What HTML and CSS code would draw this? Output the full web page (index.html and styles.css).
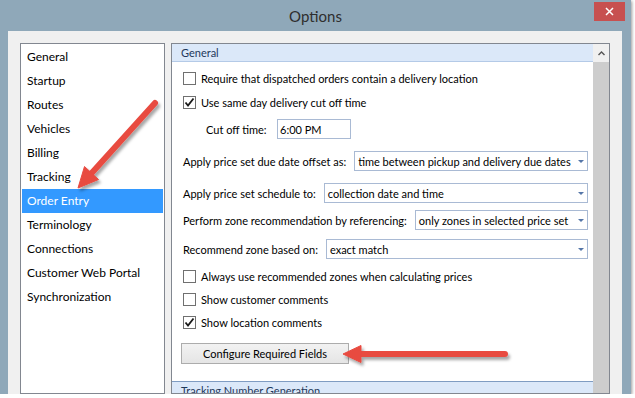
FILE: index.html
```html
<!DOCTYPE html>
<html lang="en">
<head>
  <meta charset="UTF-8">
  <meta name="viewport" content="width=device-width, initial-scale=1.0">
  <title>Options</title>
  <link rel="stylesheet" href="styles.css">
</head>
<body>
  <div class="window">
    <div class="titlebar">
      <span class="title">Options</span>
      <div class="close-btn">
        <svg width="9" height="9" viewBox="0 0 9 9"><path d="M1 1 L8 8 M8 1 L1 8" stroke="#fff" stroke-width="1.5"/></svg>
      </div>
    </div>

    <div class="client">
      <ul class="nav">
        <li>General</li>
        <li>Startup</li>
        <li>Routes</li>
        <li>Vehicles</li>
        <li>Billing</li>
        <li>Tracking</li>
        <li class="selected">Order Entry</li>
        <li>Terminology</li>
        <li>Connections</li>
        <li>Customer Web Portal</li>
        <li>Synchronization</li>
      </ul>

      <div class="panel">
        <div class="panel-body">
          <div class="band">General</div>
          <div class="section">
            <div class="check-row">
              <span class="checkbox"></span>
              <span>Require that dispatched orders contain a delivery location</span>
            </div>
            <div class="check-row second">
              <span class="checkbox checked">
                <svg width="11" height="11" viewBox="0 0 11 11"><path d="M1.5 5.5 L4 8.5 L9.5 1.5" fill="none" stroke="#1a1a1a" stroke-width="1.8"/></svg>
              </span>
              <span>Use same day delivery cut off time</span>
            </div>
            <div class="cut-row">
              <span class="cut-label">Cut off time:</span>
              <span class="textbox">6:00 PM</span>
            </div>
            <div class="field-row row-offset">
              <span>Apply price set due date offset as:</span>
              <span class="select">time between pickup and delivery due dates</span>
            </div>
            <div class="field-row row-schedule">
              <span>Apply price set schedule to:</span>
              <span class="select">collection date and time</span>
            </div>
            <div class="field-row row-zone">
              <span>Perform zone recommendation by referencing:</span>
              <span class="select">only zones in selected price set</span>
            </div>
            <div class="field-row row-based">
              <span>Recommend zone based on:</span>
              <span class="select">exact match</span>
            </div>
            <div class="check-row after-fields">
              <span class="checkbox"></span>
              <span>Always use recommended zones when calculating prices</span>
            </div>
            <div class="check-row">
              <span class="checkbox"></span>
              <span>Show customer comments</span>
            </div>
            <div class="check-row">
              <span class="checkbox checked">
                <svg width="11" height="11" viewBox="0 0 11 11"><path d="M1.5 5.5 L4 8.5 L9.5 1.5" fill="none" stroke="#1a1a1a" stroke-width="1.8"/></svg>
              </span>
              <span>Show location comments</span>
            </div>
            <button class="btn" type="button">Configure Required Fields</button>
          </div>
          <div class="band band-next">Tracking Number Generation</div>
        </div>
        <div class="scrollbar">
          <div class="scroll-up">
            <svg width="7" height="5" viewBox="0 0 7 5"><path d="M0.5 4 L3.5 1 L6.5 4" fill="none" stroke="#555" stroke-width="1.4"/></svg>
          </div>
          <div class="scroll-thumb"></div>
        </div>
      </div>
    </div>

    <!-- callout arrows drawn over the dialog -->
    <svg class="arrows" width="631" height="394" viewBox="0 0 631 394">
      <defs>
        <filter id="shadow" x="-20%" y="-20%" width="140%" height="160%">
          <feDropShadow dx="2" dy="3" stdDeviation="1.5" flood-color="#000" flood-opacity="0.35"/>
        </filter>
      </defs>
      <g filter="url(#shadow)" fill="#e84b41" stroke="#e84b41">
        <line x1="155" y1="103" x2="89" y2="176" stroke-width="6" stroke-linecap="round"/>
        <polygon points="78,188 84.5,166.5 98.5,179.5" stroke-width="1" stroke-linejoin="round"/>
        <line x1="505" y1="354" x2="356" y2="354" stroke-width="6" stroke-linecap="round"/>
        <polygon points="343,354 361,345.5 361,362.5" stroke-width="1" stroke-linejoin="round"/>
      </g>
    </svg>
  </div>
</body>
</html>
```

FILE: styles.css
```css
body {
  margin: 0;
  padding: 0;
  background-color: #ffffff;
  font-family: Lato, "Liberation Sans", sans-serif;
}
.window {
  position: relative;
  width: 631px;
  height: 394px;
  background-color: #8fa8b9;
  box-shadow: 1px 1px 3px rgba(0, 0, 0, 0.4);
  overflow: hidden;
}
.titlebar {
  height: 31px;
  display: grid;
  grid-template-columns: 1fr auto 1fr;
  align-items: center;
}
.title {
  grid-column: 2;
  font-size: 15px;
  color: #2e2e2e;
}
.close-btn {
  grid-column: 3;
  justify-self: end;
  align-self: start;
  width: 31px;
  height: 19px;
  margin-top: 2px;
  margin-right: 6px;
  background-color: #c75050;
  display: flex;
  align-items: center;
  justify-content: center;
}
.client {
  height: 363px;
  box-sizing: border-box;
  margin: 0 9px 0 8px;
  padding: 12px 12px 0;
  background-color: #f0f0f0;
  display: flex;
  gap: 6px;
}
.nav {
  width: 145px;
  box-sizing: border-box;
  margin: 0;
  padding: 1px;
  list-style: none;
  background-color: #ffffff;
  border: 1px solid #828790;
}
.nav li {
  height: 24px;
  line-height: 24px;
  padding-left: 5px;
  font-size: 12px;
  color: #000000;
}
.nav li.selected {
  background-color: #3399ff;
  color: #ffffff;
}
.panel {
  width: 439px;
  box-sizing: border-box;
  border: 1px solid #828790;
  background-color: #ffffff;
  display: flex;
}
.panel-body {
  flex: 1;
  display: flex;
  flex-direction: column;
  overflow: hidden;
  font-size: 11px;
  color: #000000;
}
.band {
  flex-shrink: 0;
  height: 17px;
  line-height: 17px;
  padding-left: 9px;
  background-color: #dbe8f9;
  border-bottom: 1px solid #b4cae7;
  color: #1e395b;
  font-size: 11px;
}
.band-next {
  border-top: 1px solid #7f9cc2;
  border-bottom: none;
  height: 20px;
}
.section {
  padding: 5px 5px 0 11px;
  display: flex;
  flex-direction: column;
}
.check-row {
  height: 23px;
  display: flex;
  align-items: center;
  gap: 5px;
}
.check-row.second {
  margin-top: 1px;
}
.check-row.after-fields {
  margin-top: 6px;
}
.checkbox {
  width: 13px;
  height: 13px;
  box-sizing: border-box;
  border: 1px solid #707070;
  background-color: #ffffff;
  display: flex;
  align-items: center;
  justify-content: center;
}
.cut-row {
  height: 20px;
  margin-top: 5px;
  padding-left: 23px;
  display: flex;
  align-items: center;
}
.cut-label {
  width: 71px;
}
.textbox {
  width: 74px;
  height: 20px;
  box-sizing: border-box;
  border: 1px solid #a9bad4;
  padding-left: 2px;
  display: flex;
  align-items: center;
}
.field-row {
  height: 20px;
  display: flex;
  align-items: center;
}
.row-offset { margin-top: 12px; }
.row-schedule { margin-top: 12px; }
.row-zone { margin-top: 7px; }
.row-based { margin-top: 9px; }
.select {
  flex: 1;
  height: 20px;
  box-sizing: border-box;
  margin-left: 8px;
  border: 1px solid #a9bad4;
  padding-left: 3px;
  display: flex;
  align-items: center;
  white-space: nowrap;
}
.select::after {
  content: "";
  margin-left: auto;
  margin-right: 3px;
  border-left: 3px solid transparent;
  border-right: 3px solid transparent;
  border-top: 3px solid #5576a8;
}
.btn {
  align-self: flex-start;
  width: 168px;
  height: 21px;
  margin: 9px 0 17px -2px;
  padding: 0;
  border: 1px solid #acacac;
  background: linear-gradient(#f2f2f2, #e5e5e5);
  font-family: Lato, "Liberation Sans", sans-serif;
  font-size: 11px;
  color: #000000;
}
.scrollbar {
  width: 16px;
  display: flex;
  flex-direction: column;
}
.scroll-up {
  height: 18px;
  background-color: #f0f0f0;
  display: flex;
  align-items: center;
  justify-content: center;
}
.scroll-thumb {
  flex: 1;
  background-color: #cdcdcd;
}
.arrows {
  position: absolute;
  top: 0;
  left: 0;
  pointer-events: none;
}
```
